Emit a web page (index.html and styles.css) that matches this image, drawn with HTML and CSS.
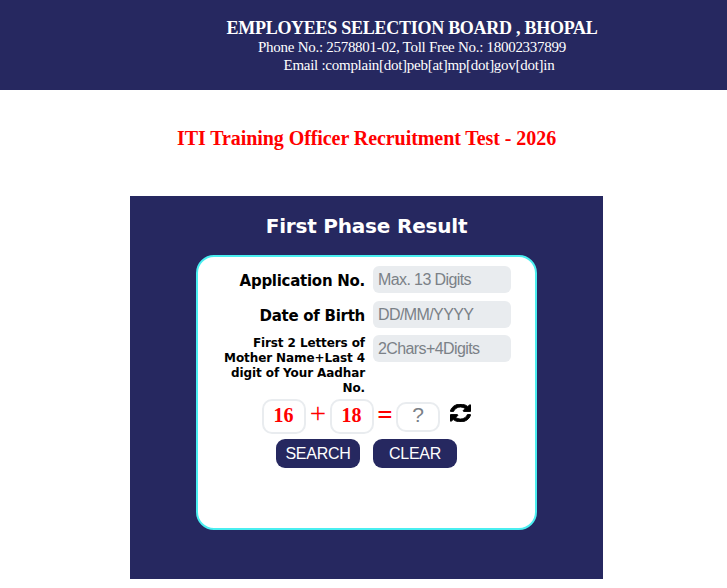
FILE: index.html
```html
<!DOCTYPE html>
<html lang="en">
<head>
<meta charset="utf-8">
<title>First Phase Result</title>
<link rel="stylesheet" href="styles.css">
</head>
<body>
<header class="top">
  <div class="top-text">
    <div class="org">EMPLOYEES SELECTION BOARD , BHOPAL</div>
    <div class="phone">Phone No.: 2578801-02, Toll Free No.: 18002337899</div>
    <div class="email">Email :complain[dot]peb[at]mp[dot]gov[dot]in</div>
  </div>
</header>
<h1 class="exam">ITI Training Officer Recruitment Test - 2026</h1>
<main class="panel">
  <h2 class="panel-title">First Phase Result</h2>
  <form class="card">
    <div class="fields">
      <label class="lbl lbl-big">Application No.</label>
      <input class="field" placeholder="Max. 13 Digits">
      <label class="lbl lbl-big">Date of Birth</label>
      <input class="field" placeholder="DD/MM/YYYY">
      <label class="lbl lbl-small">First 2 Letters of Mother Name+Last 4 digit of Your Aadhar No.</label>
      <input class="field field-tight" placeholder="2Chars+4Digits">
    </div>
    <div class="captcha">
      <span class="num">16</span>
      <span class="op op-plus">+</span>
      <span class="num">18</span>
      <span class="op op-eq">=</span>
      <input class="answer" placeholder="?">
      <svg class="refresh" viewBox="0 0 1536 1536" preserveAspectRatio="none" aria-label="Refresh"><path d="M1511 928q0 5-1 7-64 268-268 434.500t-478 166.500q-146 0-282.500-55t-243.500-157l-129 129q-19 19-45 19t-45-19-19-45v-448q0-26 19-45t45-19h448q26 0 45 19t19 45-19 45l-137 137q71 66 161 102t187 36q134 0 250-65t186-179q11-17 53-117 8-23 30-23h192q13 0 22.500 9.500t9.500 22.500zm25-800v448q0 26-19 45t-45 19h-448q-26 0-45-19t-19-45 19-45l138-138q-148-137-349-137-134 0-250 65t-186 179q-11 17-53 117-8 23-30 23h-199q-13 0-22.500-9.500t-9.500-22.500v-7q65-268 270-434.500t480-166.500q146 0 284 55.500t245 156.500l130-129q19-19 45-19t45 19 19 45z"/></svg>
    </div>
    <div class="actions">
      <button type="button" class="btn">SEARCH</button>
      <button type="button" class="btn">CLEAR</button>
    </div>
  </form>
</main>
</body>
</html>
```
FILE: styles.css
```css
* { box-sizing: border-box; }
html, body { margin: 0; padding: 0; background: #fff; }
body { font-family: "Liberation Serif", serif; height: 588px; overflow: hidden; }

.top { background: #262860; height: 90px; color: #fff; padding: 18px 0 0 226px; }
.top-text { width: 372px; text-align: center; }
.org { font-size: 18px; letter-spacing: -0.27px; font-weight: bold; line-height: 20px; white-space: nowrap; }
.phone { font-size: 15px; letter-spacing: -0.28px; line-height: 18px; white-space: nowrap; }
.email { font-size: 15px; letter-spacing: -0.27px; line-height: 18px; white-space: nowrap; padding-left: 14px; }

.exam { margin: 0; height: 106px; padding-top: 36px; font-size: 20px; letter-spacing: -0.07px; line-height: 24px; font-weight: bold; color: #f00; text-align: center; width: 733px; }

.panel { width: 473px; height: 383px; margin-left: 130px; background: #262860; padding-top: 17px; }
.panel-title { margin: 0; height: 42px; font-family: "DejaVu Sans", sans-serif; font-size: 20px; letter-spacing: -0.2px; line-height: 26px; font-weight: bold; color: #fff; text-align: center; }

.card { width: 341px; height: 275px; margin-left: 66px; background: #fff; border: 2px solid #4aeef0; border-radius: 18px; padding-top: 9px; }
.fields { display: grid; grid-template-columns: 167px 138px; column-gap: 8px; row-gap: 8px; }
.lbl { font-family: "DejaVu Sans", sans-serif; font-weight: bold; color: #000; text-align: right; }
.lbl-big { font-size: 15px; letter-spacing: -0.27px; line-height: 31px; height: 27px; }
.lbl-small { font-size: 12px; letter-spacing: -0.1px; line-height: 15px; padding-left: 20px; }
.field { width: 138px; height: 27px; border: 0; border-radius: 6px; background: #e9ecef; padding: 0 5px; font-family: "Liberation Sans", sans-serif; font-size: 16px; letter-spacing: -0.6px; color: #495057; }
.field-tight { margin-top: -1px; }
.field::placeholder, .answer::placeholder { color: #7b8187; opacity: 1; }

.captcha { display: flex; align-items: flex-start; margin-top: 3px; padding-left: 64px; height: 35px; }
.num { width: 44px; height: 35px; border: 2px solid #e9ecef; border-radius: 10px; padding-right: 1px; font-size: 20px; font-weight: bold; color: #f00; line-height: 28px; text-align: center; }
.op { width: 24px; color: #f00; text-align: center; font-size: 29px; line-height: 28px; }
.op-eq { font-weight: bold; width: 22px; font-size: 27px; line-height: 33px; }
.answer { width: 44px; height: 30px; margin-top: 3px; border: 2px solid #e9ecef; border-radius: 10px; background: #fff; padding: 0 0 4px; text-align: center; font-family: "Liberation Sans", sans-serif; font-size: 21px; }
.refresh { width: 21px; height: 18px; margin: 5px 0 0 10px; fill: #000; stroke: #000; stroke-width: 70; }

.actions { display: flex; gap: 13px; margin-top: 5px; padding-left: 78px; }
.btn { width: 84px; height: 29px; border: 0; border-radius: 9px; background: #262860; color: #fff; font-family: "Liberation Sans", sans-serif; font-size: 16px; letter-spacing: -0.25px; padding: 0; }
```
